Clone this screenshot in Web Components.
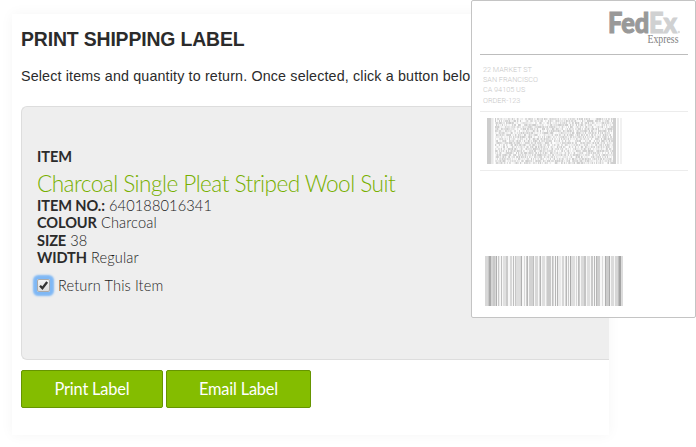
<!DOCTYPE html>
<html lang="en">
<head>
<meta charset="utf-8">
<title>Print Shipping Label</title>
<style>
    body {
        margin: 0;
        height: 447px;
        overflow: hidden;
        position: relative;
        background: #fff;
        color: #2b2b2b;
        font-family: 'Liberation Sans', Arial, sans-serif;
    }
    /* The shipping label lies over the card */
    shipping-label { position: absolute; left: 471px; top: 0; }
</style>
</head>
<body>

<return-card heading="PRINT SHIPPING LABEL">
    <span slot="intro">Select items and quantity to return. Once selected, click a button belo</span>
    <return-item name="Charcoal Single Pleat Striped Wool Suit" number="640188016341" colour="Charcoal" size="38" width="Regular"></return-item>
    <action-button slot="actions" style="--width: 142px">Print Label</action-button>
    <action-button slot="actions" style="--width: 145px">Email Label</action-button>
</return-card>

<shipping-label>
    <div>22 MARKET ST</div>
    <div>SAN FRANCISCO</div>
    <div>CA 94105 US</div>
    <div>ORDER-123</div>
</shipping-label>

<script>
// Helper for cloning a template into a shadow root
function render(host, html) {
    const template = document.createElement('template');
    template.innerHTML = html;
    host.attachShadow({ mode: 'open' });
    host.shadowRoot.appendChild(template.content.cloneNode(true));
}

/* Card with heading, intro, item panel & buttons */
class ReturnCard extends HTMLElement {
    constructor() {
        super();
        render(this, `
            <style>
                :host {
                    display: block;
                    box-sizing: border-box;
                    width: 597px;
                    height: 421px;
                    margin: 14px 0 0 12px;
                    padding: 13px 0 0 9px;
                    background: #fff;
                    box-shadow: 0 0 13px rgba(0, 0, 0, .045);
                }
                h1 {
                    margin: 0;
                    font-size: 19.4px;
                    line-height: 24px;
                    letter-spacing: -.14px;
                    white-space: nowrap;
                }
                p {
                    margin: 16px 0 0;
                    font-size: 14.3px;
                    line-height: 18px;
                    letter-spacing: .15px;
                    white-space: nowrap;
                }
                .actions { display: flex; gap: 3px; margin-top: 10px; }
            </style>
            <h1></h1>
            <p><slot name="intro"></slot></p>
            <slot></slot>
            <div class="actions"><slot name="actions"></slot></div>
        `);
        this.shadowRoot.querySelector('h1').innerText = this.getAttribute('heading');
    }
}

/* Grey panel with the details of one item */
class ReturnItem extends HTMLElement {
    constructor() {
        super();
        render(this, `
            <style>
                :host {
                    display: block;
                    box-sizing: border-box;
                    height: 254px;
                    margin-top: 21px;
                    padding: 41px 0 0 15px;
                    background: #eee;
                    border: 1px solid #ddd;
                    border-right: 0;
                    border-radius: 6px 0 0 6px;
                    font-family: Lato, sans-serif;
                    font-weight: 300;
                    font-size: 14.6px;
                    line-height: 17.6px;
                    letter-spacing: .12px;
                    color: #1c1c1c;
                }
                b { font-weight: 700; letter-spacing: -.1px; color: #2b2b2b; }
                h2 {
                    margin: 4px 0 -1px;
                    font-size: 22.6px;
                    font-weight: 300;
                    line-height: 28px;
                    letter-spacing: -.54px;
                    color: #78b000;
                }
                label { display: flex; align-items: center; gap: 8px; margin: 10px 0 0; }
                .box {
                    box-sizing: border-box;
                    width: 13px;
                    height: 13px;
                    border: 1px solid #aaa;
                    border-radius: 2px;
                    background: linear-gradient(#f4f4f4, #ddd);
                    box-shadow: 0 0 2px 3.5px #7fb8f5;
                }
                svg { display: block; width: 11px; height: 11px; }
            </style>
            <b>ITEM</b>
            <h2></h2>
            <div><b>ITEM NO.:</b> <span id="number"></span></div>
            <div><b>COLOUR</b> <span id="colour"></span></div>
            <div><b>SIZE</b> <span id="size"></span></div>
            <div><b>WIDTH</b> <span id="width"></span></div>
            <label>
                <span class="box"><svg viewBox="0 0 12 12"><path d="M2.2 6.2 4.8 8.9 10 2.2" fill="none" stroke="#333" stroke-width="2.5"/></svg></span>
                <span>Return This Item</span>
            </label>
        `);
        this.shadowRoot.querySelector('h2').innerText = this.getAttribute('name');
        ['number', 'colour', 'size', 'width'].forEach(key => {
            this.shadowRoot.getElementById(key).innerText = this.getAttribute(key);
        });
    }
}

/* Green button */
class ActionButton extends HTMLElement {
    constructor() {
        super();
        render(this, `
            <style>
                :host { display: block; }
                button {
                    display: block;
                    width: var(--width);
                    height: 38px;
                    padding: 0 0 2px;
                    background: #84bd00;
                    border: 1px solid #669500;
                    border-radius: 2px;
                    color: #fff;
                    font: 400 16.4px Lato, sans-serif;
                    letter-spacing: -.2px;
                }
            </style>
            <button><slot></slot></button>
        `);
    }
}

/* Linear barcode, bars given as "x width grey" */
class BarCode extends HTMLElement {
    constructor() {
        super();
        const bars = `0 3 216,3 1 200,4 2 170,6 2 212,8 2 200,10 1 216,11 1 175,13 1 200,14 1 235,16 1 192,18 3 224,21 2 202,
            25 2 216,28 1 190,30 1 200,31 4 222,35 1 216,36 1 176,39 1 216,41 1 205,42 1 182,44 4 210,48 1 190,50 3 216,
            54 1 216,55 1 180,57 3 222,61 1 222,62 4 202,67 1 192,68 1 216,70 1 182,72 1 180,73 3 234,77 2 214,80 1 216,
            81 1 184,83 1 200,85 1 170,86 1 224,87 3 222,91 1 214,93 1 188,94 1 204,96 3 218,99 2 196,102 3 222,
            106 2 202,109 1 184,111 1 182,112 3 206,117 1 220,120 1 175,121 3 204,124 1 170,126 3 218,130 3 214,
            133 1 190,134 2 164,136 2 220`;
        const rects = bars.split(',').map(bar => {
            const [x, w, g] = bar.trim().split(' ');
            return `<rect x="${x}" width="${w}" height="50" fill="rgb(${g},${g},${g})"/>`;
        }).join('');
        render(this, `
            <style>
                :host { display: block; }
                svg { display: block; background: #f7f7f7; }
            </style>
            <svg width="138" height="50">${rects}</svg>
        `);
    }
}

/* Stacked 2D code with start and stop bars */
class MatrixCode extends HTMLElement {
    constructor() {
        super();
        let seed = 7;
        let cells = '';
        for (let y = 0; y < 46; y += 2) {
            for (let x = 8; x < 126; x++) {
                seed = (seed * 16807) % 2147483647;
                const g = 205 + Math.floor(seed / 2147483647 * 50);
                cells += `<rect x="${x}" y="${y}" width="1" height="2" fill="rgb(${g},${g},${g})"/>`;
            }
        }
        render(this, `
            <style>
                :host { display: block; }
                svg { display: block; }
            </style>
            <svg width="135" height="46">
                <rect width="4" height="46" fill="#cdcdcd"/>
                <rect x="4" width="2" height="46" fill="#e8e8e8"/>
                <rect x="6" width="1" height="46" fill="#f2f2f2"/>
                ${cells}
                <rect x="126" width="3" height="46" fill="#cfcfcf"/>
                <rect x="130" width="2" height="46" fill="#ebebeb"/>
                <rect x="133" width="2" height="46" fill="#f1f1f1"/>
            </svg>
        `);
    }
}

/* Shipping label, the address goes in the slot */
class ShippingLabel extends HTMLElement {
    constructor() {
        super();
        render(this, `
            <style>
                :host {
                    display: block;
                    box-sizing: border-box;
                    width: 225px;
                    height: 318px;
                    padding: 9px 7px 0 8px;
                    background: #fff;
                    border: 1px solid #c4c4c4;
                    border-radius: 2px;
                }
                .logo { display: block; width: 76px; height: 36px; margin-left: 128px; overflow: visible; }
                hr { margin: 0; border: 0; border-top: 1px solid #ececec; }
                hr.dark { margin-top: 8px; border-color: #bdbdbd; }
                .address {
                    height: 46px;
                    padding: 10px 0 0 3px;
                    font: 300 7.3px/10.2px Roboto, sans-serif;
                    color: #c6c6c6;
                }
                matrix-code { margin: 6px 0 6px 7px; }
                bar-code { margin: 85px 0 0 5px; }
            </style>
            <svg class="logo" viewBox="0 0 76 36">
                <text x="0" y="22.8" textLength="69" lengthAdjust="spacingAndGlyphs" font-family="Lato, sans-serif" font-weight="900" font-size="28.5" stroke-width="1.1"><tspan fill="#999" stroke="#999">Fed</tspan><tspan fill="#d0d1d2" stroke="#d0d1d2">Ex</tspan></text>
                <circle cx="70.8" cy="22" r="1.2" fill="#ddd"/>
                <text x="39.5" y="33" textLength="31" lengthAdjust="spacingAndGlyphs" font-family="Liberation Serif, serif" font-size="11.5" fill="#808080">Express</text>
            </svg>
            <hr class="dark">
            <div class="address"><slot></slot></div>
            <hr>
            <matrix-code></matrix-code>
            <hr>
            <bar-code></bar-code>
        `);
    }
}

// Define Custom Elements
customElements.define('bar-code', BarCode);
customElements.define('matrix-code', MatrixCode);
customElements.define('action-button', ActionButton);
customElements.define('return-item', ReturnItem);
customElements.define('return-card', ReturnCard);
customElements.define('shipping-label', ShippingLabel);
</script>
</body>
</html>
